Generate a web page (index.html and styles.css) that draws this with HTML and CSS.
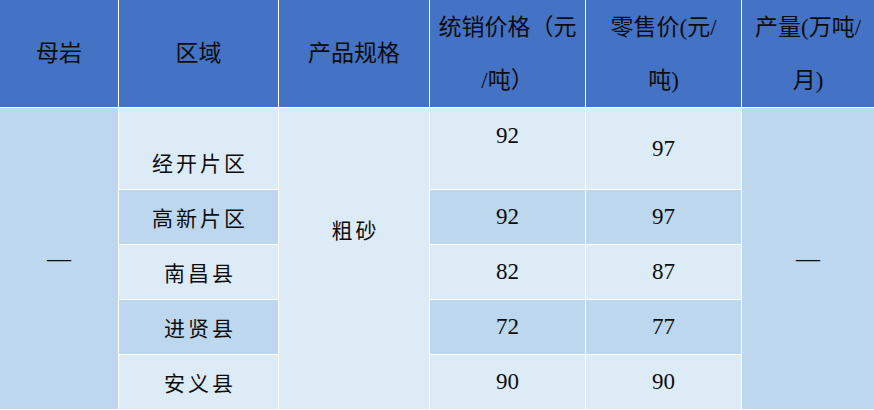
FILE: index.html
```html
<!DOCTYPE html>
<html lang="zh-CN">
<head>
<meta charset="utf-8">
<title>价格表</title>
<link rel="stylesheet" href="styles.css">
</head>
<body>
<table class="price-table">
  <colgroup>
    <col class="c1"><col class="c2"><col class="c3"><col class="c4"><col class="c5"><col class="c6">
  </colgroup>
  <thead>
    <tr class="head-row">
      <th>母岩</th>
      <th>区域</th>
      <th>产品规格</th>
      <th>统销价格（元<br>/吨）</th>
      <th>零售价(元/<br>吨)</th>
      <th class="last">产量(万吨/<br>月)</th>
    </tr>
  </thead>
  <tbody>
    <tr class="row-tall">
      <td rowspan="5" class="span dark dash">—</td>
      <td class="region light bottom">经开片区</td>
      <td rowspan="5" class="span light spec">粗砂</td>
      <td class="num light top">92</td>
      <td class="num light">97</td>
      <td rowspan="5" class="span dark dash last">—</td>
    </tr>
    <tr class="row">
      <td class="region dark">高新片区</td>
      <td class="num dark">92</td>
      <td class="num dark">97</td>
    </tr>
    <tr class="row">
      <td class="region light">南昌县</td>
      <td class="num light">82</td>
      <td class="num light">87</td>
    </tr>
    <tr class="row">
      <td class="region dark">进贤县</td>
      <td class="num dark">72</td>
      <td class="num dark">77</td>
    </tr>
    <tr class="row">
      <td class="region light">安义县</td>
      <td class="num light">90</td>
      <td class="num light">90</td>
    </tr>
  </tbody>
</table>
</body>
</html>
```
FILE: styles.css
```css
html, body {
  margin: 0;
  padding: 0;
  background: #ffffff;
  overflow: hidden;
}

.price-table {
  width: 874px;
  table-layout: fixed;
  border-collapse: separate;
  border-spacing: 0;
  color: #0d0d0d;
}

.c1 { width: 119px; }
.c2 { width: 160px; }
.c3 { width: 151px; }
.c4 { width: 156px; }
.c5 { width: 156px; }
.c6 { width: 132px; }

.price-table th,
.price-table td {
  padding: 0;
  border-right: 1px solid #ffffff;
  border-bottom: 1px solid #ffffff;
  text-align: center;
  vertical-align: middle;
}

.price-table .last {
  border-right: none;
}

.head-row {
  height: 108px;
}

.head-row th {
  background: #4472c4;
  font-family: "Liberation Serif", "Noto Sans CJK SC", serif;
  font-weight: normal;
  font-size: 23px;
  line-height: 53px;
  letter-spacing: 0;
}

.row-tall { height: 82px; }
.row { height: 55px; }

.light { background: #ddebf7; }
.dark { background: #bdd7ee; }

.region {
  font-family: "Noto Sans CJK SC", sans-serif;
  font-size: 21px;
  line-height: 30px;
  letter-spacing: 3px;
  padding-left: 3px !important;
}

.region.bottom {
  vertical-align: bottom;
  padding-bottom: 12px;
}

.num {
  font-family: "Liberation Serif", serif;
  font-size: 23px;
  line-height: 30px;
}

.num.top {
  vertical-align: top;
  padding-top: 13px;
}

.spec {
  font-family: "Noto Sans CJK SC", sans-serif;
  font-size: 21px;
  letter-spacing: 3px;
  padding-left: 3px !important;
  padding-bottom: 60px !important;
}

.dash {
  font-family: "Liberation Serif", serif;
  font-size: 24px;
}
```
